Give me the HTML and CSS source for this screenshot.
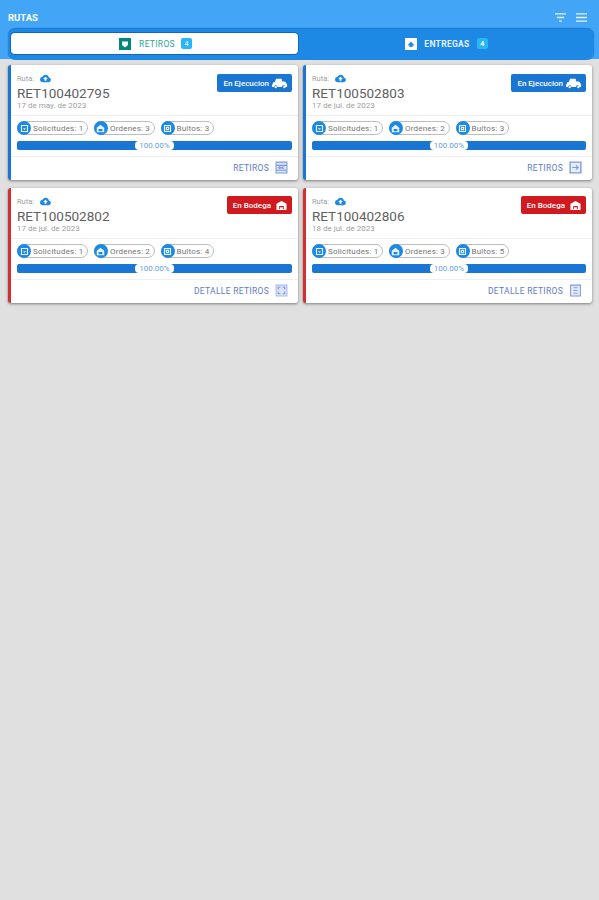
FILE: index.html
```html
<!DOCTYPE html>
<html lang="es">
<head>
<meta charset="utf-8">
<title>Rutas</title>
<link rel="stylesheet" href="styles.css">
</head>
<body>
<svg class="defs" width="0" height="0" aria-hidden="true">
  <symbol id="cloud" viewBox="0 0 24 24"><path fill="currentColor" d="M19.35 10.04A7.49 7.49 0 0 0 12 4a7.48 7.48 0 0 0-6.65 4.04A6 6 0 0 0 6 20h13a5 5 0 0 0 .35-9.96zM14 13v4h-4v-4H7l5-5 5 5h-3z"/></symbol>
  <symbol id="truck" viewBox="0 0 24 16"><path fill="currentColor" d="M1 11 3 6h2l2-5h8l1 4h4l3 4v4h-2.500a2.500 2.500 0 0 0-5 0H9a2.500 2.500 0 0 0-5 0H1zM6.500 11.500a1.700 1.700 0 1 1 0 3.400a1.700 1.700 0 0 1 0-3.400zM19 11.500a1.700 1.700 0 1 1 0 3.400a1.700 1.700 0 0 1 0-3.400z"/></symbol>
  <symbol id="store" viewBox="0 0 24 24"><path fill="currentColor" d="M12 2 1 8v14h22V8zM7 20v-7h10v7h-2v-4H9v4z"/></symbol>
  <symbol id="sol" viewBox="0 0 24 24"><path fill="none" stroke="currentColor" stroke-width="3" d="M4 4h16v16H4z"/><path fill="currentColor" d="M8 11h8l-4 5z"/></symbol>
  <symbol id="ord" viewBox="0 0 24 24"><path fill="currentColor" d="M12 2 2 10v12h20V10zM7 13h10v6H7z"/></symbol>
  <symbol id="bul" viewBox="0 0 24 24"><path fill="none" stroke="currentColor" stroke-width="3" d="M4 4h16v16H4zM9 9h6v6H9z"/></symbol>
  <symbol id="grid-arrows" viewBox="0 0 24 24"><path fill="#dbe5f7" stroke="currentColor" stroke-width="2" d="M2 2h20v20H2z"/><path fill="none" stroke="currentColor" stroke-width="2" d="M2 8h20M2 17h20M5 12.500h5M8 10l3 2.500L8 15M16 10l-3 2.500 3 2.500"/></symbol>
  <symbol id="box-arrow" viewBox="0 0 24 24"><path fill="#e6edfa" stroke="currentColor" stroke-width="2.500" d="M2 2h20v20H2z"/><path fill="none" stroke="currentColor" stroke-width="2" d="M6 12h11M13 8l4 4-4 4"/></symbol>
  <symbol id="corners" viewBox="0 0 24 24"><path fill="#dbe5f7" stroke="#a9bdea" stroke-width="2" d="M2 2h20v20H2z"/><path fill="none" stroke="currentColor" stroke-width="2" d="M6 10V6h4M14 6h4v4M6 14v4h4M18 14v4h-4"/></symbol>
  <symbol id="doc" viewBox="0 0 24 24"><path fill="#e6edfa" stroke="currentColor" stroke-width="2" d="M3 2h18v20H3z"/><path fill="none" stroke="currentColor" stroke-width="2" d="M8 7h8M8 12h8M8 17h8"/></symbol>
</svg>
<header class="appbar">
  <div class="toolbar">
    <span class="title">RUTAS</span>
    <div class="actions">
      <svg class="act" viewBox="0 0 14 12"><path fill="none" stroke="currentColor" stroke-width="1.500" d="M1 2h12M3 6h8M5.500 10h3"/></svg>
      <svg class="act" viewBox="0 0 14 12"><path fill="none" stroke="currentColor" stroke-width="1.500" d="M1 2h12M1 6h12M1 10h12"/></svg>
    </div>
  </div>
  <nav class="tabs">
    <div class="tab tab-on">
      <svg class="tab-ico" viewBox="0 0 12 12"><path fill="#00897b" d="M0 0h12v12H0z"/><path fill="#fff" d="M3 3.500h6V7L6 9.500 3 7z"/></svg>
      <span class="tab-label">RETIROS</span>
      <span class="tab-count">4</span>
    </div>
    <div class="tab">
      <svg class="tab-ico" viewBox="0 0 12 12"><path fill="#fff" d="M0 0h12v12H0z"/><path fill="#1e88e5" d="M6 3.500 9.500 7.500h-7zM4.500 7.500h3V9h-3z"/></svg>
      <span class="tab-label">ENTREGAS</span>
      <span class="tab-count">4</span>
    </div>
  </nav>
</header>
<main class="grid">

  <article class="card card-run">
    <div class="top">
      <div>
        <div class="ruta"><span>Ruta:</span><svg class="cloud"><use href="#cloud"/></svg></div>
        <div class="code">RET100402795</div>
        <div class="date">17 de may. de 2023</div>
      </div>
      <div class="state state-run">En Ejecucion<svg class="truck"><use href="#truck"/></svg></div>
    </div>
    <div class="mid">
      <div class="chips">
        <div class="chip"><span class="dot"><svg><use href="#sol"/></svg></span>Solicitudes: 1</div>
        <div class="chip"><span class="dot"><svg><use href="#ord"/></svg></span>Ordenes: 3</div>
        <div class="chip"><span class="dot"><svg><use href="#bul"/></svg></span>Bultos: 3</div>
      </div>
      <div class="bar"><span class="pct">100.00%</span></div>
    </div>
    <div class="foot"><span>RETIROS</span><svg class="foot-ico"><use href="#grid-arrows"/></svg></div>
  </article>

  <article class="card card-run">
    <div class="top">
      <div>
        <div class="ruta"><span>Ruta:</span><svg class="cloud"><use href="#cloud"/></svg></div>
        <div class="code">RET100502803</div>
        <div class="date">17 de jul. de 2023</div>
      </div>
      <div class="state state-run">En Ejecucion<svg class="truck"><use href="#truck"/></svg></div>
    </div>
    <div class="mid">
      <div class="chips">
        <div class="chip"><span class="dot"><svg><use href="#sol"/></svg></span>Solicitudes: 1</div>
        <div class="chip"><span class="dot"><svg><use href="#ord"/></svg></span>Ordenes: 2</div>
        <div class="chip"><span class="dot"><svg><use href="#bul"/></svg></span>Bultos: 3</div>
      </div>
      <div class="bar"><span class="pct">100.00%</span></div>
    </div>
    <div class="foot"><span>RETIROS</span><svg class="foot-ico"><use href="#box-arrow"/></svg></div>
  </article>

  <article class="card card-store">
    <div class="top">
      <div>
        <div class="ruta"><span>Ruta:</span><svg class="cloud"><use href="#cloud"/></svg></div>
        <div class="code">RET100502802</div>
        <div class="date">17 de jul. de 2023</div>
      </div>
      <div class="state state-store">En Bodega<svg class="house"><use href="#store"/></svg></div>
    </div>
    <div class="mid">
      <div class="chips">
        <div class="chip"><span class="dot"><svg><use href="#sol"/></svg></span>Solicitudes: 1</div>
        <div class="chip"><span class="dot"><svg><use href="#ord"/></svg></span>Ordenes: 2</div>
        <div class="chip"><span class="dot"><svg><use href="#bul"/></svg></span>Bultos: 4</div>
      </div>
      <div class="bar"><span class="pct">100.00%</span></div>
    </div>
    <div class="foot"><span>DETALLE RETIROS</span><svg class="foot-ico"><use href="#corners"/></svg></div>
  </article>

  <article class="card card-store">
    <div class="top">
      <div>
        <div class="ruta"><span>Ruta:</span><svg class="cloud"><use href="#cloud"/></svg></div>
        <div class="code">RET100402806</div>
        <div class="date">18 de jul. de 2023</div>
      </div>
      <div class="state state-store">En Bodega<svg class="house"><use href="#store"/></svg></div>
    </div>
    <div class="mid">
      <div class="chips">
        <div class="chip"><span class="dot"><svg><use href="#sol"/></svg></span>Solicitudes: 1</div>
        <div class="chip"><span class="dot"><svg><use href="#ord"/></svg></span>Ordenes: 3</div>
        <div class="chip"><span class="dot"><svg><use href="#bul"/></svg></span>Bultos: 5</div>
      </div>
      <div class="bar"><span class="pct">100.00%</span></div>
    </div>
    <div class="foot"><span>DETALLE RETIROS</span><svg class="foot-ico"><use href="#doc"/></svg></div>
  </article>

</main>
</body>
</html>
```

FILE: styles.css
```css
* { box-sizing: border-box; }
html, body { height: 100%; }
body {
  margin: 0;
  background: #e0e0e0;
  font-family: Roboto, "Liberation Sans", sans-serif;
  color: #616161;
}
.defs { position: absolute; }

.appbar { background: #42a5f5; height: 59px; padding: 0 5px 0 8px; }
.toolbar { height: 29px; display: flex; align-items: center; justify-content: space-between; padding-top: 6px; }
.title { color: #fff; font-size: 9.500px; font-weight: 700; }
.actions { display: flex; gap: 8px; padding-right: 6px; }
.act { width: 13px; height: 11px; color: #e3f2fd; display: block; }

.tabs {
  height: 31px;
  display: grid;
  grid-template-columns: 293px 1fr;
  background: #1e88e5;
  border-radius: 7px;
  box-shadow: 0 -1px 1px #1976d2;
}
.tab { display: flex; align-items: center; justify-content: center; gap: 7px; color: #e3f2fd; font-size: 8.500px; font-weight: 700; height: 21px; margin-top: 4px; padding-right: 2px; }
.tab-on { background: #fff; color: #26a69a; font-weight: 400; border-radius: 4px; margin-left: 3px; margin-right: 3px; padding: 0 0 0 2px; gap: 6px; box-shadow: 0 0 0 1px #1565c0; }
.tab-on .tab-label { margin-left: 2px; }
.tab-ico { width: 12px; height: 12px; }
.tab-label { letter-spacing: .3px; }
.tab-count { background: #29b6f6; color: #fff; font-size: 7px; width: 11px; height: 11px; border-radius: 2px; display: flex; align-items: center; justify-content: center; }

.grid {
  display: grid;
  grid-template-columns: 290px 289px;
  column-gap: 5px;
  row-gap: 8px;
  padding: 6px 0 0 8px;
}
.card {
  height: 115px;
  background: #fff;
  border-left: 3px solid #1976d2;
  border-radius: 3px;
  box-shadow: 0 1px 3px rgba(0,0,0,.45);
  display: flex;
  flex-direction: column;
}
.card-store { border-left-color: #d32f2f; }

.top { height: 51px; display: flex; justify-content: space-between; padding: 8px 6px 0 6px; border-bottom: 1px solid #f0f0f0; }
.ruta { display: flex; align-items: center; gap: 6px; font-size: 7.500px; color: #9e9e9e; height: 10px; }
.cloud { width: 11px; height: 11px; color: #1e88e5; }
.code { font-size: 13.500px; color: #616161; line-height: 16px; margin-top: 2px; }
.date { font-size: 8px; color: #9e9e9e; line-height: 10px; }

.state { height: 18px; margin-top: 1px; border-radius: 2px; color: #fff; font-size: 8px; display: flex; align-items: center; font-weight: 500; }
.state-run { background: #1976d2; padding: 0 4px 0 6px; gap: 2px; }
.state-store { background: #d01a1f; padding: 0 5px 0 6px; gap: 5px; margin-top: 0; }
.truck { width: 17px; height: 11px; }
.house { width: 11px; height: 11px; }

.mid { height: 41px; padding: 5px 6px 0 6px; border-bottom: 1px solid #f0f0f0; }
.chips { display: flex; gap: 5.500px; }
.chip {
  height: 14px;
  border: 1px solid #bdbdbd;
  border-radius: 7px;
  font-size: 8px;
  color: #757575;
  display: flex;
  align-items: center;
  gap: 2px;
  padding-right: 4px;
  letter-spacing: .2px;
}
.dot {
  width: 14px; height: 14px; margin: 0 0 0 -1px;
  border-radius: 50%;
  background: #1e88e5;
  color: #e3f2fd;
  display: flex; align-items: center; justify-content: center;
}
.dot svg { width: 9px; height: 9px; }

.bar { height: 9px; margin-top: 6px; background: #1976d2; border-radius: 2px; display: flex; justify-content: center; }
.pct { background: #fff; color: #64a0dc; font-size: 8px; line-height: 9px; padding: 0 4px; border-radius: 4px; }

.foot { flex: 1; display: flex; align-items: center; justify-content: flex-end; gap: 6px; padding: 0 10px 2px 0; color: #5c7cc8; font-size: 8.500px; letter-spacing: .3px; }
.foot-ico { width: 13px; height: 13px; color: #7f9ad8; }
```
